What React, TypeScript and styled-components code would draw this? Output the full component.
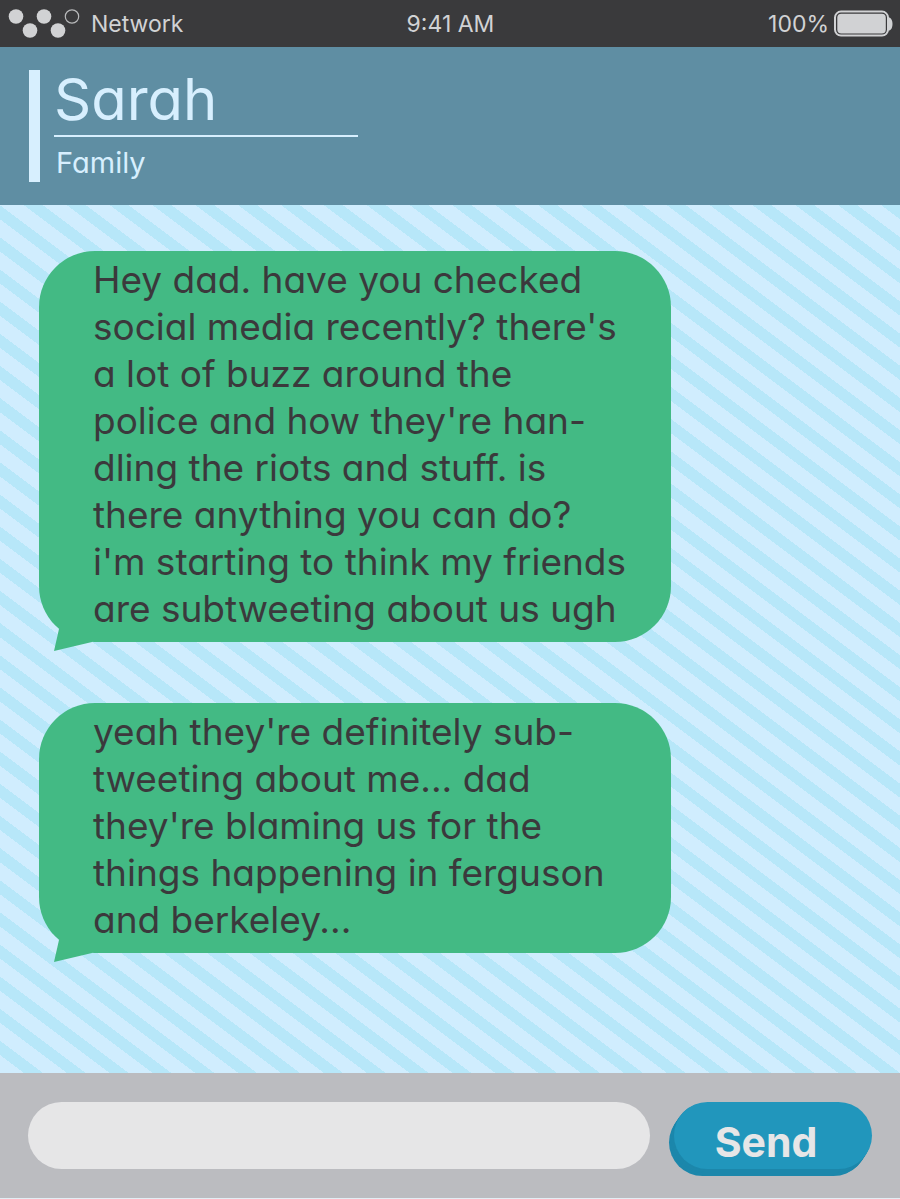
import React from 'react';
import styled, { createGlobalStyle } from 'styled-components';

const stripes = `repeating-linear-gradient(
    to top right,
    #d0edfe 0 4%,
    #b7e7f9 4% calc(100% / 14)
  )
  left bottom / 300px 225px`;

const GlobalStyle = createGlobalStyle`
  * { box-sizing: border-box; }
  body { margin: 0; background: #e3eef5; }
  body, button, input {
    font-family: Inter, Lato, sans-serif;
    font-feature-settings: "cv11";
  }
`;

const Page = styled.div`
  display: flex;
  flex-direction: column;
  min-height: 100vh;
  padding-bottom: 1px;
`;

const StatusBar = styled.div`
  display: grid;
  grid-template-columns: 1fr auto 1fr;
  align-items: center;
  height: 47px;
  padding: 0 7px 0 8px;
  background: #3a3a3c;
  color: #d1d2d4;
  font-size: 23px;
  line-height: 28px;
`;

const StatusGroup = styled.div<{ $end?: boolean; $gap: number }>`
  display: flex;
  align-items: center;
  justify-content: ${(p) => (p.$end ? 'flex-end' : 'flex-start')};
  gap: ${(p) => p.$gap}px;
`;

const ContactHeader = styled.header`
  display: flex;
  gap: 14px;
  padding: 23px 29px;
  background: #5f8ea3;
  color: #d7effe;
`;

const Accent = styled.div`
  width: 11px;
  background: #d7effe;
`;

const ContactText = styled.div`
  width: 304px;
`;

const ContactName = styled.h1`
  margin: 0;
  height: 67px;
  border-bottom: 2px solid #d7effe;
  font-size: 58px;
  line-height: 58px;
  font-weight: 400;
`;

const ContactGroup = styled.p`
  margin: 0;
  padding: 7px 0 1px 2px;
  font-size: 29px;
  line-height: 37px;
`;

const Messages = styled.main`
  flex: 1;
  display: flex;
  flex-direction: column;
  align-items: flex-start;
  gap: 61px;
  padding: 46px 39px;
  background: ${stripes};
`;

const Bubble = styled.article`
  position: relative;
  width: 632px;
  max-width: 100%;
  padding: 5px 0 10px 54px;
  border-radius: 56px;
  background: #43ba84;
  color: #3b393c;
  font-size: 37px;
  line-height: 47px;
  white-space: pre-line;
`;

const Tail = styled.svg`
  position: absolute;
  left: 15px;
  bottom: -9px;
`;

const Composer = styled.form`
  display: flex;
  align-items: flex-start;
  gap: 24px;
  padding: 29px 28px;
  background: #bbbcc0;
`;

const MessageInput = styled.input`
  flex: 1;
  min-width: 0;
  height: 67px;
  padding: 0 32px;
  border: 0;
  border-radius: 34px;
  background: #e6e6e7;
  color: #3b393c;
  font-size: 29px;
`;

const SendButton = styled.button`
  width: 198px;
  height: 67px;
  padding: 12px 14px 0 0;
  border: 0;
  border-radius: 34px;
  background: #2196bc;
  box-shadow: -1px 1px #1c87ab, -2px 3px #1c87ab, -3px 4px #1c87ab,
    -4px 6px #1c87ab, -5px 7px #1c87ab;
  color: #e6e6e7;
  font-size: 41px;
  line-height: 50px;
  font-weight: 700;
`;

const SignalDots = () => (
  <svg width="72" height="32" viewBox="0 0 72 32" aria-hidden="true">
    <g fill="#d1d2d4">
      <circle cx="8" cy="8.5" r="7.3" />
      <circle cx="22" cy="22.5" r="7.3" />
      <circle cx="36" cy="8.5" r="7.3" />
      <circle cx="50" cy="22.5" r="7.3" />
    </g>
    <circle cx="64" cy="8.5" r="6.7" fill="none" stroke="#b9babc" strokeWidth="1.2" />
  </svg>
);

const Battery = () => (
  <svg width="60" height="28" viewBox="0 0 60 28" aria-hidden="true">
    <path d="M55 7.5h1.5q3 1.5 3 6.5t-3 6.5H55z" fill="#d1d2d4" />
    <rect x="2" y="1.6" width="53" height="24" rx="6" fill="#3a3a3c" stroke="#d1d2d4" strokeWidth="2" />
    <rect x="4.3" y="3.8" width="48.5" height="19.6" rx="4" fill="#d1d2d4" />
  </svg>
);

const messages = [
  `Hey dad. have you checked
social media recently? there's
a lot of buzz around the
police and how they're han-
dling the riots and stuff. is
there anything you can do?
i'm starting to think my friends
are subtweeting about us ugh`,
  `yeah they're definitely sub-
tweeting about me... dad
they're blaming us for the
things happening in ferguson
and berkeley...`,
];

export default function App() {
  return (
    <>
      <GlobalStyle />
      <Page>
        <StatusBar>
          <StatusGroup $gap={11}>
            <SignalDots />
            <span>Network</span>
          </StatusGroup>
          <span>9:41 AM</span>
          <StatusGroup $end $gap={4}>
            <span>100%</span>
            <Battery />
          </StatusGroup>
        </StatusBar>
        <ContactHeader>
          <Accent />
          <ContactText>
            <ContactName>Sarah</ContactName>
            <ContactGroup>Family</ContactGroup>
          </ContactText>
        </ContactHeader>
        <Messages>
          {messages.map((text) => (
            <Bubble key={text}>
              {text}
              <Tail width="40" height="22" viewBox="0 0 40 22" aria-hidden="true">
                <path d="M5 0 0 22 38 13V0z" fill="#43ba84" />
              </Tail>
            </Bubble>
          ))}
        </Messages>
        <Composer onSubmit={(event) => event.preventDefault()}>
          <MessageInput type="text" aria-label="Message" />
          <SendButton type="submit">Send</SendButton>
        </Composer>
      </Page>
    </>
  );
}
